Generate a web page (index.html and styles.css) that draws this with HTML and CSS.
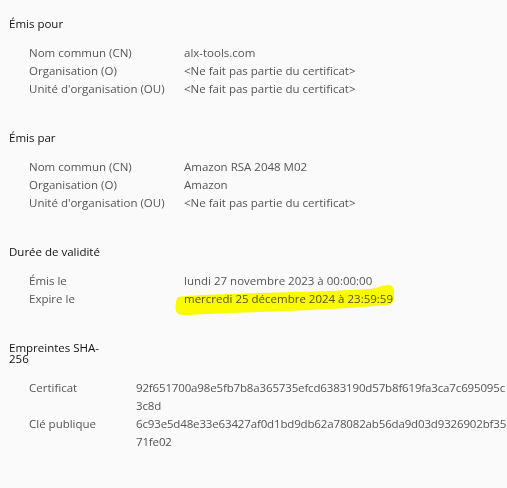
FILE: index.html
```html
<!DOCTYPE html>
<html lang="fr">
<head>
<meta charset="utf-8">
<title>Certificat</title>
<link rel="stylesheet" href="styles.css">
</head>
<body>
<div class="viewer">
  <section class="section">
    <h2 class="heading">Émis pour</h2>
    <div class="rows">
      <div class="label">Nom commun (CN)</div><div class="value">alx-tools.com</div>
      <div class="label">Organisation (O)</div><div class="value">&lt;Ne fait pas partie du certificat&gt;</div>
      <div class="label">Unité d'organisation (OU)</div><div class="value">&lt;Ne fait pas partie du certificat&gt;</div>
    </div>
  </section>
  <section class="section">
    <h2 class="heading">Émis par</h2>
    <div class="rows">
      <div class="label">Nom commun (CN)</div><div class="value">Amazon RSA 2048 M02</div>
      <div class="label">Organisation (O)</div><div class="value">Amazon</div>
      <div class="label">Unité d'organisation (OU)</div><div class="value">&lt;Ne fait pas partie du certificat&gt;</div>
    </div>
  </section>
  <section class="section">
    <h2 class="heading">Durée de validité</h2>
    <div class="rows">
      <div class="label">Émis le</div><div class="value">lundi 27 novembre 2023 à 00:00:00</div>
      <div class="label">Expire le</div>
      <div class="value marked">mercredi 25 décembre 2024 à 23:59:59<svg class="highlight" width="222" height="36" viewBox="0 0 222 36"><path d="M3 14 C10 13 18 12.5 25 12 L85 10 L155 8 L195 6 C203 5 208 2 213 2 C217 2 219 4 219 10 C219 15 219 19 216 21 C214 22 213 22 210 22.3 L175 25 L115 28 L55 30 L10 32 C5 32 2 31 1 28 C0 24 1 16 3 14 Z" fill="#ffff00"/></svg></div>
    </div>
  </section>
  <section class="section">
    <h2 class="heading narrow">Empreintes SHA-256</h2>
    <div class="rows hashes">
      <div class="label">Certificat</div><div class="value hash"><span class="line">92f651700a98e5fb7b8a365735efcd6383190d57b8f619fa3ca7c695095c</span><span class="line">3c8d</span></div>
      <div class="label">Clé publique</div><div class="value hash"><span class="line">6c93e5d48e33e63427af0d1bd9db62a78082ab56da9d03d9326902bf35</span><span class="line">71fe02</span></div>
    </div>
  </section>
</div>
</body>
</html>
```

FILE: styles.css
```css
html, body {
  margin: 0;
  padding: 0;
  background: #fafafa;
  overflow: hidden;
}
body {
  font-family: "Open Sans", "Noto Sans", sans-serif;
  font-size: 11.5px;
  color: #555;
}
.viewer {
  padding: 18px 0 0 9px;
}
.section {
  margin-bottom: 34px;
}
.heading {
  margin: 0 0 15px 0;
  font-size: 11.5px;
  font-weight: normal;
  line-height: 11px;
  color: #111;
}
.heading.narrow {
  width: 100px;
}
.rows {
  display: grid;
  grid-template-columns: 155px auto;
  padding-left: 20px;
  line-height: 18px;
}
.rows.hashes {
  grid-template-columns: 107px auto;
}
.value {
  white-space: nowrap;
}
.hash {
  letter-spacing: -0.15px;
}
.line {
  display: block;
}
.marked {
  position: relative;
}
.highlight {
  position: absolute;
  left: -9px;
  top: -7px;
  mix-blend-mode: multiply;
}
```
